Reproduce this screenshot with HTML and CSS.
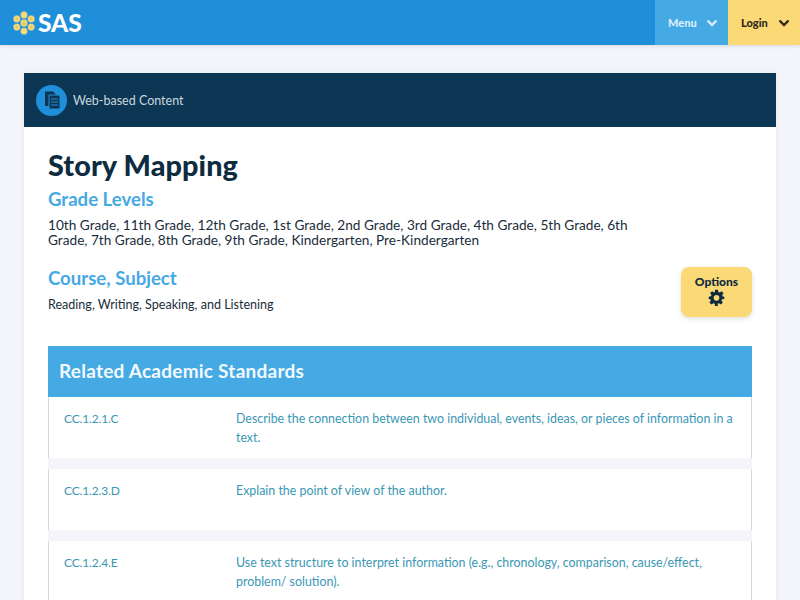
FILE: index.html
```html
<!DOCTYPE html>
<html lang="en">
<head>
<meta charset="utf-8">
<title>Story Mapping</title>
<link rel="stylesheet" href="styles.css">
</head>
<body>
<header class="topbar">
  <a class="brand">
    <svg class="flower" viewBox="0 0 26 26" aria-hidden="true">
      <g fill="#f7da7c" stroke="#1f8fd9" stroke-width=".4">
        <circle cx="13" cy="4.200" r="3.900"/><circle cx="13" cy="21.800" r="3.900"/>
        <circle cx="5.200" cy="8.600" r="3.900"/><circle cx="20.800" cy="8.600" r="3.900"/>
        <circle cx="5.200" cy="17.400" r="3.900"/><circle cx="20.800" cy="17.400" r="3.900"/>
        <circle cx="13" cy="13" r="4"/>
      </g>
      <g fill="#e6c65e">
        <circle cx="13" cy="13" r="2"/><circle cx="5.200" cy="8.600" r="1.500"/><circle cx="20.800" cy="8.600" r="1.500"/>
        <circle cx="5.200" cy="17.400" r="1.500"/><circle cx="20.800" cy="17.400" r="1.500"/>
      </g>
    </svg>
    <span class="brand-name">SAS</span>
  </a>
  <nav class="topnav">
    <a class="nav-item nav-menu">Menu
      <svg class="chev" viewBox="0 0 12 8" aria-hidden="true"><path d="M1.500 1.500 6 6l4.500-4.500"/></svg>
    </a>
    <a class="nav-item nav-login">Login
      <svg class="chev" viewBox="0 0 12 8" aria-hidden="true"><path d="M1.500 1.500 6 6l4.500-4.500"/></svg>
    </a>
  </nav>
</header>

<main class="page">
  <section class="card">
    <div class="type-bar">
      <span class="type-icon">
        <svg viewBox="0 0 20 20" width="20" height="20" aria-hidden="true">
          <path fill="#0c3654" d="M3 1.500h8l3 3V16H3z"/>
          <path fill="#0c3654" stroke="#1f8fd9" d="M7 5h11V19H7z"/>
          <path stroke="#1f8fd9" d="M9 9h7M9 12h7M9 15h7"/>
        </svg>
      </span>
      <span>Web-based Content</span>
    </div>
    <div class="card-body">
      <h1>Story Mapping</h1>
      <div class="meta-row">
        <div class="meta">
          <h2>Grade Levels</h2>
          <p class="grades">10th Grade, 11th Grade, 12th Grade, 1st Grade, 2nd Grade, 3rd Grade, 4th Grade, 5th Grade, 6th Grade, 7th Grade, 8th Grade, 9th Grade, Kindergarten, Pre-Kindergarten</p>
          <h2 class="course">Course, Subject</h2>
          <p class="subject">Reading, Writing, Speaking, and Listening</p>
        </div>
        <button class="options">Options
          <svg viewBox="0 0 24 24" width="17" height="17" aria-hidden="true"><path fill="#0e2c40" fill-rule="evenodd" d="M10 1h4l.6 3.200 1.900.8 2.700-1.900 2.800 2.800-1.900 2.700.8 1.900L23 11v3l-3.100.6-.8 1.900 1.900 2.700-2.800 2.800-2.700-1.900-1.900.8L14 24h-4l-.6-3.100-1.900-.8-2.700 1.900L2 19.200l1.900-2.700-.8-1.900L1 14v-3l3.100-.6.8-1.900L3 5.800 5.800 3l2.700 1.900 1-.7zM12 8.500a4 4 0 1 0 0 8 4 4 0 0 0 0-8z"/></svg>
        </button>
      </div>
      <section class="standards">
        <h3>Related Academic Standards</h3>
        <div class="std-row">
          <div class="std-code">CC.1.2.1.C</div>
          <div class="std-text">Describe the connection between two individual, events, ideas, or pieces of information in a text.</div>
        </div>
        <div class="std-row">
          <div class="std-code">CC.1.2.3.D</div>
          <div class="std-text">Explain the point of view of the author.</div>
        </div>
        <div class="std-row">
          <div class="std-code">CC.1.2.4.E</div>
          <div class="std-text">Use text structure to interpret information (e.g., chronology, comparison, cause/effect, problem/ solution).</div>
        </div>
      </section>
    </div>
  </section>
</main>
</body>
</html>
```
FILE: styles.css
```css
* { box-sizing: border-box; }
html, body { margin: 0; height: 600px; overflow: hidden; }
body { background: #f3f5fa; font-family: "Lato", "Liberation Sans", sans-serif; color: #0e2c40; }

.topbar { height: 45px; background: #1f8fd9; display: flex; justify-content: space-between; box-shadow: 0 1px 4px rgba(0,0,0,.12); }
.brand { display: flex; align-items: center; gap: 2px; padding-left: 12px; }
.flower { width: 24px; height: 26px; }
.brand-name { color: #fff; font-weight: 900; font-size: 24.500px; }
.topnav { display: flex; }
.nav-item { display: flex; align-items: center; justify-content: space-between; padding: 0 10px 0 13px; font-size: 11px; font-weight: 900; }
.nav-menu { background: #45a9e4; color: #d9eefb; width: 73px; }
.nav-login { background: #fbd976; color: #2f2a1a; width: 72px; }
.chev { width: 12px; height: 8px; fill: none; stroke: currentColor; stroke-width: 2.400; }

.page { padding: 28px 24px 0; }
.card { background: #fff; box-shadow: 0 0 6px rgba(0,0,0,.06); }
.type-bar { height: 54px; background: #0c3654; color: #c9d6df; display: flex; align-items: center; gap: 6px; padding-left: 12px; font-size: 12.500px; }
.type-icon { width: 31px; height: 31px; border-radius: 50%; background: #1f8fd9; display: flex; align-items: center; justify-content: center; }
.card-body { padding: 24px 24px 0; }
h1 { margin: -1px 0 1px; font-weight: 900; font-size: 28.800px; letter-spacing: .1px; line-height: 30px; color: #0e2c40; }
.meta-row { display: flex; justify-content: space-between; align-items: flex-end; }
.meta { width: 600px; }
h2 { margin: 8px 0 0; font-weight: 700; font-size: 18.600px; line-height: 20px; color: #45a9e4; }
.grades { margin: 9px 0 0; font-size: 13.650px; line-height: 15px; color: #1a2d3a; }
.course { margin-top: 20px; }
.subject { margin: 9px 0 -1px; font-size: 12.550px; line-height: 15px; color: #1a2d3a; }
.options { width: 71px; height: 50px; margin-bottom: -6px; border: 0; border-radius: 8px; background: #fbd976; box-shadow: 0 2px 5px rgba(0,0,0,.12); display: flex; flex-direction: column; align-items: center; justify-content: flex-start; padding: 8px 0 0; font-family: inherit; font-weight: 900; font-size: 12px; line-height: 14px; color: #0e2c40; }

.standards { margin-top: 35px; }
h3 { margin: 0; height: 51px; display: flex; align-items: center; padding: 0 0 2px 11px; background: #45a9e4; color: #f2f9fd; font-weight: 700; font-size: 19px; letter-spacing: .24px; }
.std-row { display: grid; grid-template-columns: 172px 1fr; padding: 12px 8px 12px 15px; height: 61px; margin-bottom: 11px; border-left: 1px solid #d5d9de; border-right: 1px solid #d5d9de; font-size: 12.400px; line-height: 19px; color: #3a97b4; }
.std-row + .std-row { box-shadow: 0 -11px 0 #f3f5fa; }
.std-code { color: #3a97b4; font-size: 12px; letter-spacing: -.15px; }
```
